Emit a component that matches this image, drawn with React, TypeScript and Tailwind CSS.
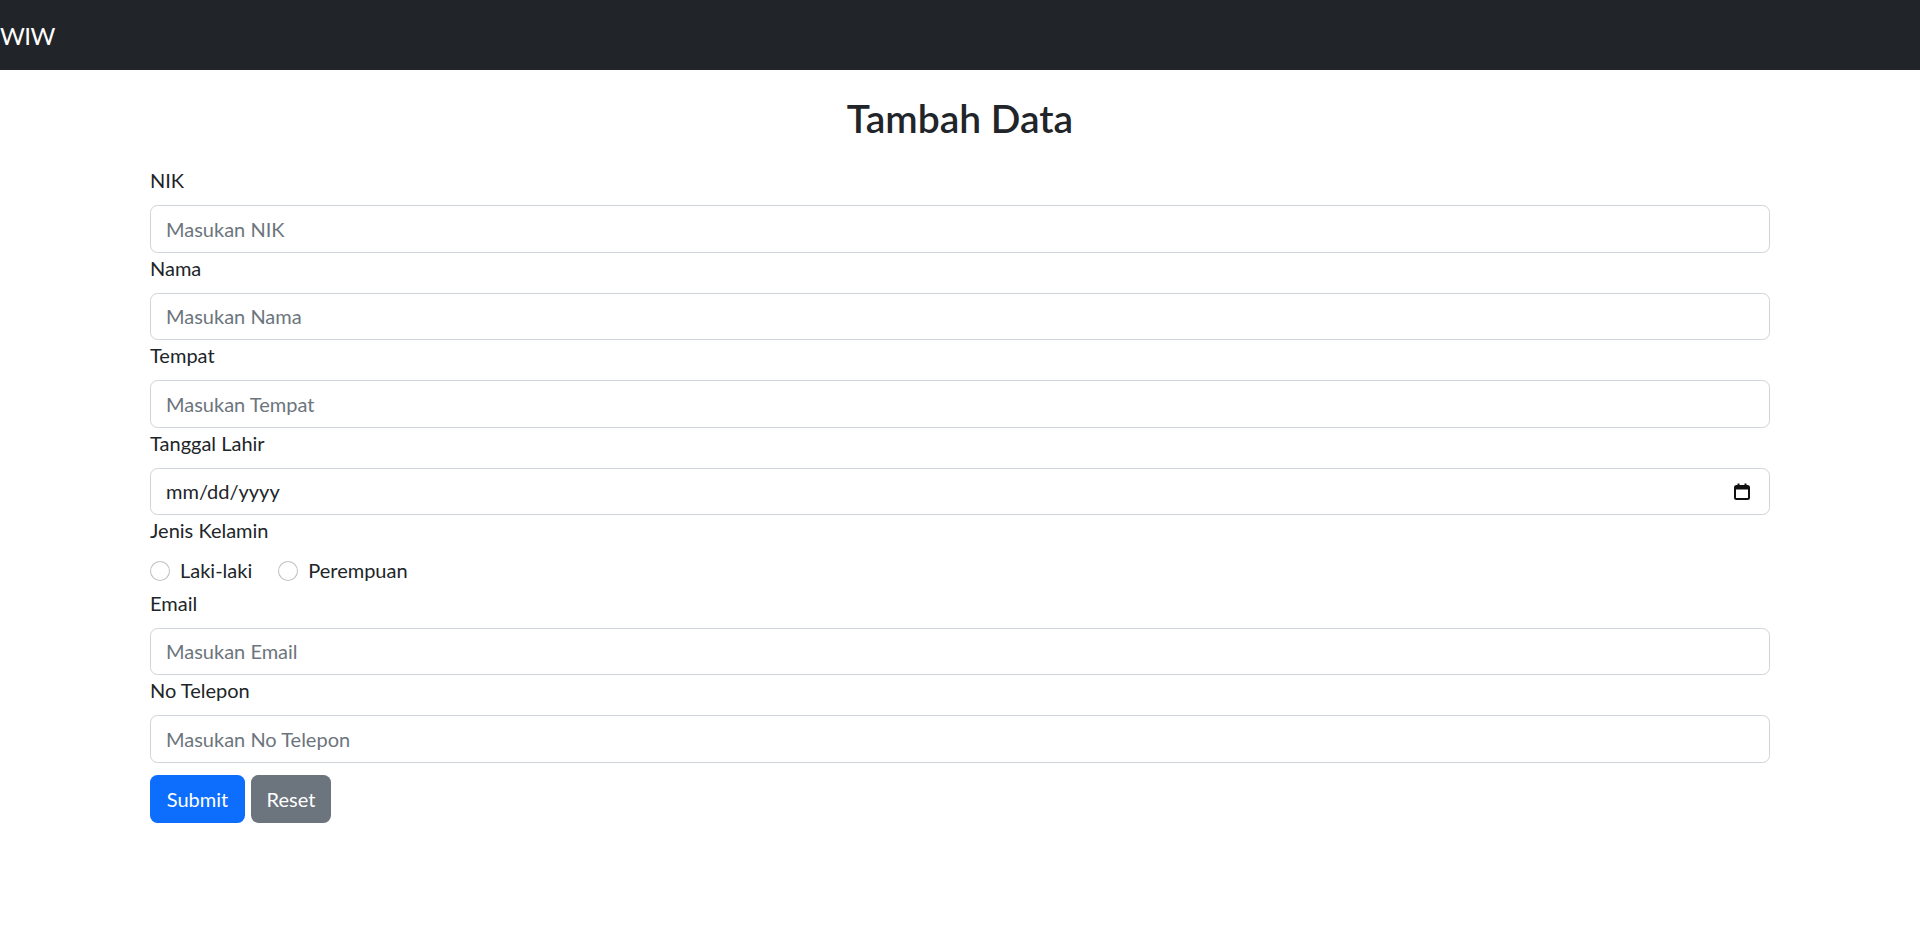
import React from "react";

const font = { fontFamily: "Lato, 'Liberation Sans', sans-serif" };

function Field({ label, placeholder, type = "text" }: { label: string; placeholder?: string; type?: string }) {
  return (
    <div className="flex flex-col">
      <label className="text-[20px] leading-[30px] mb-[10px] text-[#212529]">{label}</label>
      <input
        type={type}
        placeholder={placeholder}
        className="h-[47.5px] w-full rounded-[7.5px] border border-[#ced4da] bg-white px-[15px] text-[20px] leading-[30px] text-[#212529] placeholder:text-[#6c757d] outline-none"
        style={font}
      />
    </div>
  );
}

function Radio({ label }: { label: string }) {
  return (
    <label className="flex items-center mr-[26px] h-[30px]">
      <span className="w-[20px] h-[20px] rounded-full border border-[rgba(0,0,0,0.25)] bg-white mr-[10px] mt-[2px]" />
      <span className="text-[20px] leading-[30px] text-[#212529]">{label}</span>
    </label>
  );
}

export default function App() {
  return (
    <div className="min-h-[950px] bg-white text-[#212529]" style={font}>
      <nav className="h-[70px] bg-[#212529] flex items-center">
        <span className="text-[24px] leading-[37.5px] text-white tracking-[-0.5px] mt-[1px]">WIW</span>
      </nav>
      <div className="mx-auto w-[1650px] px-[15px]">
        <h2 className="text-center text-[39px] leading-[48px] font-semibold mt-[24px] mb-[23px]">Tambah Data</h2>
        <form className="flex flex-col" onSubmit={(e) => e.preventDefault()}>
          <Field label="NIK" placeholder="Masukan NIK" />
          <Field label="Nama" placeholder="Masukan Nama" />
          <Field label="Tempat" placeholder="Masukan Tempat" />
          <div className="flex flex-col">
            <label className="text-[20px] leading-[30px] mb-[10px]">Tanggal Lahir</label>
            <div className="h-[47.5px] w-full rounded-[7.5px] border border-[#ced4da] bg-white pl-[15px] pr-[19px] flex items-center justify-between">
              <span className="text-[20px] leading-[30px] text-[#212529]">mm/dd/yyyy</span>
              <svg width="16" height="17" viewBox="0 0 16 17" fill="none">
                <rect x="1" y="3" width="14" height="13" rx="1.5" stroke="#111" strokeWidth="2" />
                <rect x="1" y="3" width="14" height="3.5" fill="#111" />
                <rect x="3.5" y="0.5" width="2" height="3" fill="#111" />
                <rect x="10.5" y="0.5" width="2" height="3" fill="#111" />
              </svg>
            </div>
          </div>
          <div className="flex flex-col">
            <label className="text-[20px] leading-[30px] mb-[10px]">Jenis Kelamin</label>
            <div className="flex items-center h-[30px] mb-[2.5px]">
              <Radio label="Laki-laki" />
              <Radio label="Perempuan" />
            </div>
          </div>
          <Field label="Email" placeholder="Masukan Email" />
          <Field label="No Telepon" placeholder="Masukan No Telepon" />
          <div className="flex gap-[6px] mt-[12.5px]">
            <button type="submit" className="w-[95px] h-[47.5px] rounded-[7.5px] bg-[#0d6efd] text-white text-[20px] leading-[30px]">Submit</button>
            <button type="reset" className="w-[80px] h-[47.5px] rounded-[7.5px] bg-[#6c757d] text-white text-[20px] leading-[30px]">Reset</button>
          </div>
        </form>
      </div>
    </div>
  );
}
